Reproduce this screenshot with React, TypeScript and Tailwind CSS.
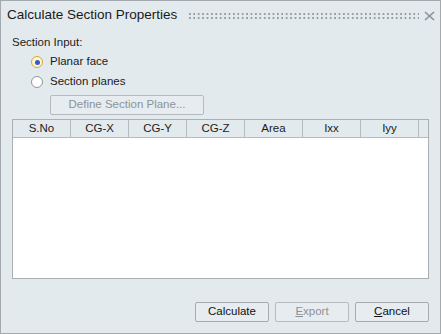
import React from "react";

const columns = ["S.No", "CG-X", "CG-Y", "CG-Z", "Area", "Ixx", "Iyy"];

function Radio({ checked, label }: { checked?: boolean; label: string }) {
    return (
        <label className="flex h-[20px] items-center gap-[7px] pl-[19px]">
            {checked ? (
                <span className="flex h-[12px] w-[12px] items-center justify-center rounded-full border border-[#e0a42c] bg-[#fdf4dc]">
                    <span className="h-[5px] w-[5px] rounded-full bg-[#2a62c4]" />
                </span>
            ) : (
                <span className="h-[12px] w-[12px] rounded-full border border-[#8f969b] bg-white" />
            )}
            <span>{label}</span>
        </label>
    );
}

function DialogButton({
    children,
    disabled,
}: {
    children: React.ReactNode;
    disabled?: boolean;
}) {
    return (
        <button
            disabled={disabled}
            className={
                disabled
                    ? "h-[20px] w-[74px] rounded-[2px] border border-[#b4babe] bg-[#e6ecef] text-[#8d9398]"
                    : "h-[20px] w-[74px] rounded-[2px] border border-[#a5abaf] bg-[#e6ecef] text-[#111]"
            }>
            {children}
        </button>
    );
}

export default function App() {
    return (
        <div className="flex h-[334px] w-[441px] flex-col border border-[#a3a9ad] bg-[#e3eaed] font-['Liberation_Sans',Arial,sans-serif] text-[11.5px] text-[#1b1b1b]">
            {/* title bar */}
            <div className="flex h-[29px] items-center pl-[6px] pr-[5px]">
                <span className="text-[13.5px] text-[#1a1a1a]">
                    Calculate Section Properties
                </span>
                <svg className="ml-[12px] h-[6px] flex-1" height="6" shapeRendering="crispEdges">
                    <defs>
                        <pattern id="grip" width="4.4" height="4" patternUnits="userSpaceOnUse">
                            <rect x="0" y="0" width="2" height="2" fill="#979da2" />
                        </pattern>
                    </defs>
                    <rect x="0" y="0" width="100%" height="6" fill="url(#grip)" />
                </svg>
                <svg className="ml-[5px]" width="11" height="10" viewBox="0 0 11 10">
                    <path d="M1 1 L10 9 M10 1 L1 9" stroke="#8a9096" strokeWidth="1.6" />
                </svg>
            </div>

            {/* body */}
            <div className="flex flex-1 flex-col px-[11px]">
                <div className="mt-[5px] leading-[14px]">Section Input:</div>
                <div className="mt-[3px]">
                    <Radio checked label="Planar face" />
                    <Radio label="Section planes" />
                </div>
                <button
                    disabled
                    className="ml-[38px] mt-[3px] h-[20px] w-[154px] rounded-[2px] border border-[#b4babe] bg-[#e6ecef] text-[#8d9398]">
                    Define Section Plane...
                </button>

                <div className="mt-[4px] flex h-[160px] flex-col border border-[#a9b0b4] bg-white">
                    <div className="flex h-[18px] border-b border-[#b4bbbf] bg-[#e3eaed]">
                        {columns.map((c) => (
                            <div
                                key={c}
                                className="flex w-[58px] items-center justify-center border-r border-[#b4bbbf]">
                                {c}
                            </div>
                        ))}
                    </div>
                    <div className="flex-1" />
                </div>

                <div className="mt-auto mb-[11px] flex justify-end gap-[6px]">
                    <DialogButton>Calculate</DialogButton>
                    <DialogButton disabled>
                        <span className="underline">E</span>xport
                    </DialogButton>
                    <DialogButton>
                        <span className="underline">C</span>ancel
                    </DialogButton>
                </div>
            </div>
        </div>
    );
}
